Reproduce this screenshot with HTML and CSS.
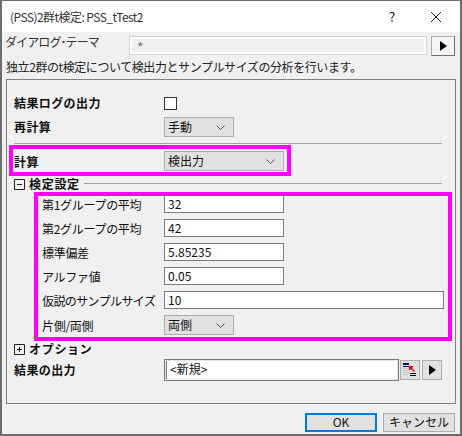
FILE: index.html
```html
<!DOCTYPE html>
<html lang="ja">
<head>
    <meta charset="UTF-8">
    <title>(PSS)2群t検定: PSS_tTest2</title>
    <link rel="stylesheet" href="styles.css">
</head>
<body>
    <div class="window">
        <div class="titlebar">
            <span class="title">(PSS)2群t検定: PSS_tTest2</span>
            <span class="help">?</span>
            <svg class="close" width="12" height="12" viewBox="0 0 12 12">
                <path d="M1 1L11 11M11 1L1 11" stroke="#222" stroke-width="1" fill="none"/>
            </svg>
        </div>
        <div class="theme-row">
            <span class="theme-label">ダイアログ･テーマ</span>
            <div class="theme-box"><div class="theme-value">*</div></div>
            <button class="arrow-btn theme-btn"><span class="arrow"></span></button>
        </div>
        <p class="desc">独立2群のt検定について検出力とサンプルサイズの分析を行います。</p>

        <div class="group">
            <div class="row row-log">
                <label class="label bold raised">結果ログの出力</label>
                <span class="checkbox"></span>
            </div>
            <div class="row row-recalc">
                <label class="label bold raised">再計算</label>
                <div class="select short">手動<svg class="chev" width="9" height="5" viewBox="0 0 9 5"><path d="M0.5 0.5L4.5 4.5L8.5 0.5" stroke="#555" fill="none"/></svg></div>
            </div>
            <div class="sep"></div>
            <div class="mark mark-calc">
                <div class="row">
                    <label class="label bold">計算</label>
                    <div class="select mid">検出力<svg class="chev" width="9" height="5" viewBox="0 0 9 5"><path d="M0.5 0.5L4.5 4.5L8.5 0.5" stroke="#555" fill="none"/></svg></div>
                </div>
            </div>
            <div class="section">
                <span class="tree">
                    <svg width="11" height="11" viewBox="0 0 11 11"><path d="M0.5 0.5H10.5V10.5H0.5ZM3 5.5H8" stroke="#222" fill="none"/></svg>
                </span>
                <span class="section-title bold">検定設定</span>
                <span class="section-line"></span>
            </div>
            <div class="mark mark-params">
                <div class="row first">
                    <label class="label">第1グループの平均</label>
                    <input class="input mid clipped" type="text" value="32">
                </div>
                <div class="row">
                    <label class="label">第2グループの平均</label>
                    <input class="input mid" type="text" value="42">
                </div>
                <div class="row">
                    <label class="label">標準偏差</label>
                    <input class="input mid" type="text" value="5.85235">
                </div>
                <div class="row">
                    <label class="label">アルファ値</label>
                    <input class="input mid" type="text" value="0.05">
                </div>
                <div class="row">
                    <label class="label tight">仮説のサンプルサイズ</label>
                    <input class="input long" type="text" value="10">
                </div>
                <div class="row">
                    <label class="label">片側/両側</label>
                    <div class="select short">両側<svg class="chev" width="9" height="5" viewBox="0 0 9 5"><path d="M0.5 0.5L4.5 4.5L8.5 0.5" stroke="#555" fill="none"/></svg></div>
                </div>
            </div>
            <div class="section section-opt">
                <span class="tree">
                    <svg width="11" height="11" viewBox="0 0 11 11"><path d="M0.5 0.5H10.5V10.5H0.5ZM3 5.5H8M5.5 3V8" stroke="#222" fill="none"/></svg>
                </span>
                <span class="section-title bold">オプション</span>
            </div>
            <div class="row row-output">
                <label class="label bold raised">結果の出力</label>
                <div class="output-box"><div class="output-value">&lt;新規&gt;</div></div>
                <button class="arrow-btn flat">
                    <svg width="14" height="14" viewBox="0 0 14 14">
                        <path d="M0 5.5H6M0 7.5H6M0 9.5H6M0 11.5H6" stroke="#c8c8c8" fill="none"/>
                        <rect x="0" y="0" width="6" height="2" fill="#000080"/>
                        <path d="M0 3.5H6" stroke="#000080" fill="none"/>
                        <path d="M7 12.5H13M7 10.5H13" stroke="#000" fill="none"/>
                        <path d="M6 3H10V4L9 5L12 8L11 9L8 6L7 7H6Z" fill="#ee0000"/>
                    </svg>
                </button>
                <button class="arrow-btn flat"><span class="arrow"></span></button>
            </div>
        </div>

        <div class="actions">
            <button class="btn btn-ok">OK</button>
            <button class="btn">キャンセル</button>
        </div>
    </div>
</body>
</html>
```
FILE: styles.css
```css
body {
    margin: 0;
    background-color: #fff;
    font-family: "Noto Sans CJK JP", "Noto Sans", sans-serif;
    font-size: 12px;
    color: #111;
}
.window {
    width: 462px;
    height: 436px;
    box-sizing: border-box;
    border: solid #6e6e6e;
    border-width: 1px 2px 2px 2px;
    background-color: #f0f0f0;
    overflow: hidden;
}
.bold {
    font-weight: 700;
    letter-spacing: 0.4px;
}
.raised {
    margin-top: -2px;
}
.titlebar {
    height: 31px;
    margin: 0 -1px;
    background-color: #fff;
    display: flex;
    align-items: center;
    padding: 0 19px 0 9px;
}
.title {
    flex: 1;
    color: #333;
    font-size: 12px;
    letter-spacing: -0.55px;
}
.help {
    width: 12px;
    margin-right: 32px;
    font-size: 13px;
    text-align: center;
}
.theme-row {
    display: flex;
    margin-top: 4px;
    height: 20px;
    padding-left: 3px;
}
.theme-label {
    width: 124px;
    color: #333;
    line-height: 12px;
    letter-spacing: -0.9px;
    white-space: nowrap;
}
.theme-box {
    width: 298px;
    height: 19px;
    box-sizing: border-box;
    border: 1px solid #d4d4d4;
    background-color: #fff;
    padding: 2px;
}
.theme-value {
    height: 13px;
    background-color: #f0f0f0;
    color: #777;
    padding-left: 5px;
    font-size: 14px;
    line-height: 17px;
}
.arrow-btn {
    width: 20px;
    height: 20px;
    padding: 0;
    border: 1px solid #adadad;
    background-color: #e1e1e1;
    display: flex;
    align-items: center;
    justify-content: center;
}
.theme-btn {
    width: 24px;
    margin-left: 4px;
    background-color: #f5f5f5;
    border-bottom-color: #707070;
    border-right-color: #707070;
}
.arrow {
    width: 0;
    height: 0;
    border-left: 7px solid #000;
    border-top: 5px solid transparent;
    border-bottom: 5px solid transparent;
}
.desc {
    margin: 2px 0 0 4px;
    height: 21px;
    line-height: 17px;
    color: #222;
    letter-spacing: -0.42px;
    white-space: nowrap;
}
.group {
    width: 450px;
    height: 325px;
    box-sizing: border-box;
    margin-left: 4px;
    border: 1px solid #808080;
    padding: 13px 0 0 7px;
}
.row {
    display: flex;
    align-items: center;
}
.label {
    width: 150px;
    flex: none;
    white-space: nowrap;
}
.row-log {
    height: 20px;
}
.row-recalc {
    margin-top: 4px;
}
.checkbox {
    width: 11px;
    height: 11px;
    border: 1px solid #333;
    background-color: #fff;
}
.select {
    height: 20px;
    box-sizing: border-box;
    border: 1px solid #adadad;
    background-color: #e1e1e1;
    display: flex;
    align-items: center;
    justify-content: space-between;
    padding: 0 8px 2px 3px;
}
.chev {
    margin-top: 2px;
}
.short {
    width: 70px;
}
.mid {
    width: 120px;
}
.long {
    width: 280px;
}
.sep {
    width: 428px;
    height: 1px;
    margin: 6px 0 0 0;
    background-color: #a0a0a0;
}
.mark {
    box-sizing: border-box;
    border: 4px solid #ff00ff;
}
.mark-calc {
    width: 282px;
    height: 31px;
    margin: 1px 0 0 -5px;
    padding: 2px 0 0 1px;
}
.mark-params {
    width: 418px;
    height: 149px;
    margin: 1px 0 0 20px;
    padding: 0 0 0 4px;
}
.mark-params .row {
    height: 18px;
    margin-bottom: 6px;
}
.mark-params .row.first {
    height: 17px;
}
.mark-params .row:last-child {
    height: 20px;
    margin-bottom: 0;
}
.mark-params .label {
    width: 122px;
    letter-spacing: -0.3px;
}
.mark-params .label.tight {
    letter-spacing: -0.6px;
}
.input {
    height: 18px;
    box-sizing: border-box;
    border: 1px solid #7a7a7a;
    background-color: #fff;
    padding: 0 3px 2px;
    font: inherit;
    color: #111;
    outline: none;
}
.clipped {
    height: 17px;
    border-top: 0;
}
.section {
    height: 14px;
    margin-top: 1px;
    display: flex;
    align-items: center;
}
.tree {
    width: 15px;
    display: flex;
}
.tree svg {
    display: block;
}
.section-title {
    margin: -2px 4px 0 0;
    letter-spacing: 0.7px;
}
.section-line {
    width: 358px;
    height: 1px;
    margin-top: -1px;
    background-color: #a0a0a0;
}
.section-opt {
    margin-top: 1px;
}
.row-output {
    margin-top: 3px;
    height: 22px;
}
.output-box {
    width: 235px;
    height: 22px;
    box-sizing: border-box;
    border: 1px solid #7a7a7a;
    background-color: #e6e6e6;
    padding: 1px;
}
.output-value {
    height: 18px;
    border-left: 1px solid #7a7a7a;
    background-color: #fff;
    padding-left: 3px;
    line-height: 15px;
}
.flat {
    margin-left: 2px;
}
.row-output .flat:first-of-type {
    margin-left: 1px;
}
.actions {
    display: flex;
    justify-content: flex-end;
    gap: 6px;
    margin: 9px 5px 0 0;
}
.btn {
    width: 72px;
    height: 19px;
    box-sizing: border-box;
    padding: 0 0 2px;
    border: 1px solid #adadad;
    background-color: #e1e1e1;
    font: inherit;
    color: #111;
    line-height: 14px;
}
.btn-ok {
    border: 2px solid #0078d7;
}
```
